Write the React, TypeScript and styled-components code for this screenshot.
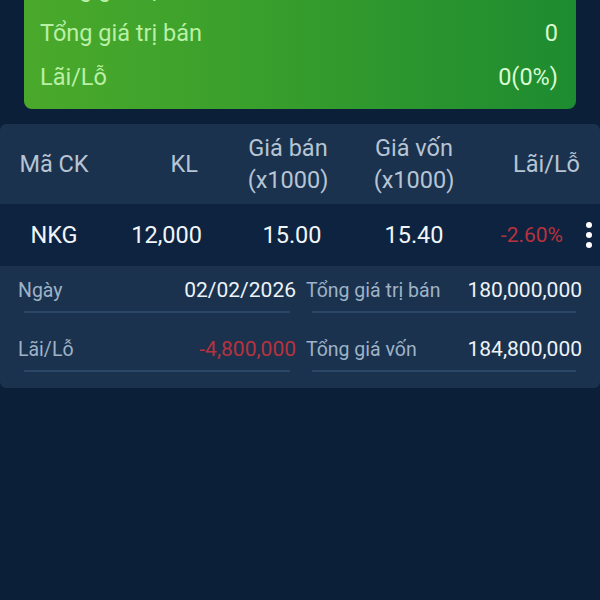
import React from "react";
import styled, { createGlobalStyle } from "styled-components";

const Global = createGlobalStyle`
  html, body { margin: 0; padding: 0; background: #0c1f39; }
  body { font-family: Roboto, "Noto Sans", sans-serif; width: 600px; height: 600px; overflow: hidden; }
`;

const Page = styled.div`
  width: 600px;
  height: 600px;
  background: #0c1f39;
  display: flex;
  flex-direction: column;
  overflow: hidden;
`;

const SummaryCard = styled.div`
  margin: -45px 24px 0;
  padding: 12px 18px 10px 16px;
  border-radius: 8px;
  background: linear-gradient(90deg, #4aa92b 0%, #3aa02c 40%, #1d8b30 100%);
  display: flex;
  flex-direction: column;
`;

const SummaryRow = styled.div`
  height: 44px;
  display: flex;
  align-items: center;
  justify-content: space-between;
  font-size: 23.5px;
`;

const SummaryLabel = styled.span`
  color: #b9f0a6;
`;

const SummaryValue = styled.span`
  color: #d9fbd0;
`;

const Table = styled.div`
  margin-top: 15px;
  display: flex;
  flex-direction: column;
`;

const HeaderRow = styled.div`
  height: 80px;
  background: #1a324e;
  border-radius: 6px 6px 0 0;
  display: grid;
  grid-template-columns: 108px 96px 168px 84px 1fr;
  align-items: center;
  color: #b7c4d3;
  font-size: 23.5px;
  line-height: 32px;
`;

const DataRow = styled.div`
  height: 62px;
  background: #0d2340;
  display: grid;
  grid-template-columns: 108px 96px 168px 84px 1fr;
  align-items: center;
  color: #f2f5f8;
  font-size: 23.5px;
`;

const Cell = styled.div<{ $align?: "left" | "center" | "right"; $pr?: number }>`
  text-align: ${(p) => p.$align || "center"};
  padding-right: ${(p) => p.$pr || 0}px;
  white-space: nowrap;
`;

const WideCell = styled.div<{ $shift?: number }>`
  display: flex;
  justify-content: center;
  text-align: center;
  white-space: nowrap;
  padding-left: ${(p) => p.$shift || 0}px;
`;

const LastCell = styled.div`
  display: flex;
  align-items: center;
  justify-content: flex-end;
  padding-right: 8px;
  gap: 23px;
`;

const Loss = styled.span<{ $size?: number }>`
  color: #b8323d;
  font-size: ${(p) => p.$size || 21}px;
`;

const Dots = styled.div`
  display: flex;
  flex-direction: column;
  gap: 4px;
  span {
    width: 6px;
    height: 6px;
    border-radius: 50%;
    background: #ffffff;
  }
`;

const Detail = styled.div`
  background: #1a324e;
  border-radius: 0 0 6px 6px;
  padding: 0 18px 16px;
  display: grid;
  grid-template-columns: 278px 276px;
  column-gap: 10px;
`;

const DetailCell = styled.div<{ $first?: boolean }>`
  padding-top: ${(p) => (p.$first ? 12 : 24)}px;
  display: flex;
  flex-direction: column;
`;

const DetailLine = styled.div`
  height: 24px;
  display: flex;
  align-items: center;
  justify-content: space-between;
  font-size: 19.5px;
`;

const DetailLabel = styled.span`
  color: #9fb2c6;
`;

const DetailValue = styled.span`
  color: #eef3f8;
  font-size: 21px;
`;

const Rule = styled.div`
  margin: 9px 6px 0;
  height: 2px;
  background: #2b4767;
`;

export default function App() {
  return (
    <Page>
      <Global />
      <SummaryCard>
        <SummaryRow>
          <SummaryLabel>Tổng giá trị mua</SummaryLabel>
          <SummaryValue>0</SummaryValue>
        </SummaryRow>
        <SummaryRow>
          <SummaryLabel>Tổng giá trị bán</SummaryLabel>
          <SummaryValue>0</SummaryValue>
        </SummaryRow>
        <SummaryRow>
          <SummaryLabel>Lãi/Lỗ</SummaryLabel>
          <SummaryValue>0(0%)</SummaryValue>
        </SummaryRow>
      </SummaryCard>
      <Table>
        <HeaderRow>
          <Cell>Mã CK</Cell>
          <Cell $align="right" $pr={6}>KL</Cell>
          <WideCell $shift={-4}>Giá bán<br />(x1000)</WideCell>
          <WideCell>Giá vốn<br />(x1000)</WideCell>
          <Cell $align="right" $pr={20}>Lãi/Lỗ</Cell>
        </HeaderRow>
        <DataRow>
          <Cell>NKG</Cell>
          <Cell $align="right" $pr={2}>12,000</Cell>
          <WideCell $shift={8}>15.00</WideCell>
          <WideCell>15.40</WideCell>
          <LastCell>
            <Loss>-2.60%</Loss>
            <Dots><span /><span /><span /></Dots>
          </LastCell>
        </DataRow>
        <Detail>
          <DetailCell $first>
            <DetailLine>
              <DetailLabel>Ngày</DetailLabel>
              <DetailValue>02/02/2026</DetailValue>
            </DetailLine>
            <Rule />
          </DetailCell>
          <DetailCell $first>
            <DetailLine>
              <DetailLabel>Tổng giá trị bán</DetailLabel>
              <DetailValue>180,000,000</DetailValue>
            </DetailLine>
            <Rule />
          </DetailCell>
          <DetailCell>
            <DetailLine>
              <DetailLabel>Lãi/Lỗ</DetailLabel>
              <Loss>-4,800,000</Loss>
            </DetailLine>
            <Rule />
          </DetailCell>
          <DetailCell>
            <DetailLine>
              <DetailLabel>Tổng giá vốn</DetailLabel>
              <DetailValue>184,800,000</DetailValue>
            </DetailLine>
            <Rule />
          </DetailCell>
        </Detail>
      </Table>
    </Page>
  );
}
